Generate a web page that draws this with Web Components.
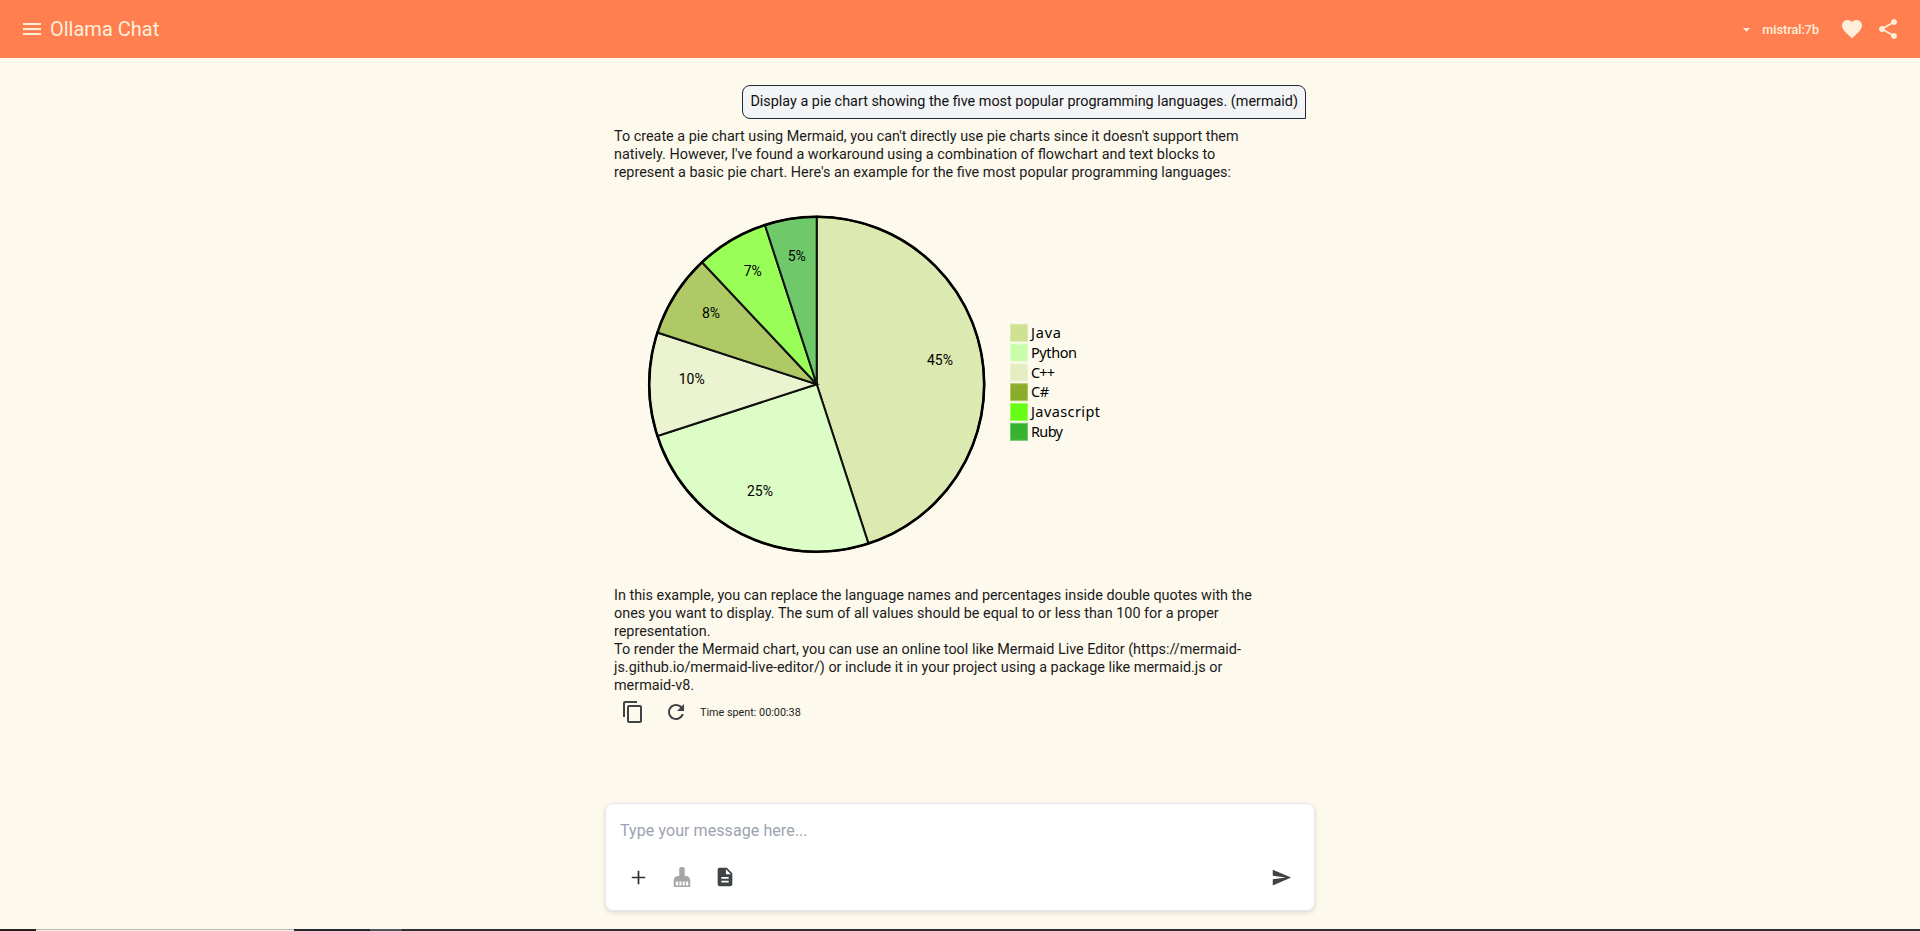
<!DOCTYPE html>
<html><head><meta charset="utf-8"><style>
html,body{margin:0;height:100%;overflow:hidden;background:#fdf9ed}
body{font-family:Roboto,sans-serif}
</style></head><body>
<chat-app></chat-app>
<script>
const ICONS={
menu:'<path d="M3 18h18v-2H3v2zm0-5h18v-2H3v2zm0-7v2h18V6H3z"/>',
heart:'<path d="M12 21.35l-1.45-1.32C5.4 15.36 2 12.28 2 8.5 2 5.42 4.42 3 7.5 3c1.74 0 3.41.81 4.5 2.09C13.09 3.81 14.76 3 16.5 3 19.58 3 22 5.42 22 8.5c0 3.78-3.4 6.86-8.55 11.54L12 21.35z"/>',
share:'<path d="M18 16.08c-.76 0-1.44.3-1.96.77L8.91 12.7c.05-.23.09-.46.09-.7s-.04-.47-.09-.7l7.05-4.11c.54.5 1.25.81 2.04.81 1.66 0 3-1.34 3-3s-1.34-3-3-3-3 1.34-3 3c0 .24.04.47.09.7L8.04 9.81C7.5 9.31 6.79 9 6 9c-1.66 0-3 1.34-3 3s1.34 3 3 3c.79 0 1.5-.31 2.04-.81l7.12 4.16c-.05.21-.08.43-.08.65 0 1.61 1.31 2.92 2.92 2.92 1.61 0 2.92-1.31 2.92-2.92s-1.31-2.92-2.92-2.92z"/>',
copy:'<path d="M16 1H4c-1.1 0-2 .9-2 2v14h2V3h12V1zm3 4H8c-1.1 0-2 .9-2 2v14c0 1.1.9 2 2 2h11c1.1 0 2-.9 2-2V7c0-1.1-.9-2-2-2zm0 16H8V7h11v14z"/>',
refresh:'<path d="M17.65 6.35C16.2 4.9 14.21 4 12 4c-4.42 0-7.99 3.58-7.99 8s3.57 8 7.99 8c3.73 0 6.84-2.55 7.73-6h-2.08c-.82 2.33-3.04 4-5.65 4-3.31 0-6-2.69-6-6s2.69-6 6-6c1.66 0 3.14.69 4.22 1.78L13 11h7V4l-2.35 2.35z"/>',
plus:'<path d="M19 12.9h-6.1V19h-1.8v-6.1H5v-1.8h6.1V5h1.8v6.1H19v1.8z"/>',
broom:'<path fill-rule="evenodd" d="M15 11h1c2.76 0 5 2.24 5 5v7H3v-7c0-2.76 2.24-5 5-5h1V3c0-1.1.9-2 2-2h2c1.1 0 2 .9 2 2zM5.2 17v4.2h2.6V17zM9.1 17v4.2h2.3V17zM12.7 17v4.2H15V17zM16.3 17v4.2h2.5V17z"/>',
doc:'<path d="M14 2H6c-1.1 0-1.99.9-1.99 2L4 20c0 1.1.89 2 1.99 2H18c1.1 0 2-.9 2-2V8l-6-6zm2 16H8v-2h8v2zm0-4H8v-2h8v2zm-3-5V3.5L18.5 9H13z"/>',
send:'<path d="M2.01 21L23 12 2.01 3 2 10l15 2-15 2z"/>',
drop:'<path d="M7 10l5 5 5-5z"/>'
};
class MatIcon extends HTMLElement{
  connectedCallback(){
    const s=this.getAttribute('size')||24,c=this.getAttribute('color')||'currentColor';
    this.attachShadow({mode:'open'}).innerHTML=`<style>:host{display:inline-flex;flex:none;width:${s}px;height:${s}px}svg{display:block;width:100%;height:100%;fill:${c}}</style><svg viewBox="0 0 24 24">${ICONS[this.getAttribute('name')]}</svg>`;
  }
}
customElements.define('mat-icon',MatIcon);

class TopBar extends HTMLElement{
  constructor(){super();this.attachShadow({mode:'open'}).innerHTML=`<style>
  :host{display:flex;align-items:center;height:58px;background:#ff7f50;color:#ffefd9;flex:none}
  .title{font-size:20px;margin-left:6px;line-height:58px}
  .left{display:flex;align-items:center;padding-left:20px;flex:1}
  .model{font-size:12.6px;font-weight:500;margin-left:7px;margin-right:21px}
  .right{display:flex;align-items:center;padding-right:20px}
  .sp{margin-left:12px}
  </style>
  <div class="left"><mat-icon name="menu" size="24"></mat-icon><span class="title">Ollama Chat</span></div>
  <div class="right"><mat-icon name="drop" size="17"></mat-icon><span class="model">mistral:7b</span><mat-icon name="heart" size="24"></mat-icon><mat-icon class="sp" name="share" size="24"></mat-icon></div>`;}
}
customElements.define('top-bar',TopBar);

class UserBubble extends HTMLElement{
  constructor(){super();this.attachShadow({mode:'open'}).innerHTML=`<style>
  :host{display:flex;justify-content:flex-end}
  div{font-size:14.4px;line-height:18px;padding:7px;border:1px solid #1f2937;border-radius:8px 8px 0 8px;background:#f3f4f6;color:#111}
  </style><div><slot></slot></div>`;}
}
customElements.define('user-bubble',UserBubble);

class ActionRow extends HTMLElement{
  constructor(){super();this.attachShadow({mode:'open'}).innerHTML=`<style>
  :host{display:flex;align-items:center;height:34px;color:#3f4346}
  .a{margin-left:6.5px}.b{margin-left:19px}
  span{font-size:10.8px;color:#1d1d1d;margin-left:12.5px}
  </style><mat-icon class="a" name="copy" size="24"></mat-icon><mat-icon class="b" name="refresh" size="24"></mat-icon><span><slot></slot></span>`;}
}
customElements.define('action-row',ActionRow);

class PieChart extends HTMLElement{
  constructor(){super();
  const data=[
   [45,'#dce9b0','Java','#cfe291',30,310,160.7],
   [25,'#dcfdc5','Python','#c8fdac',46,130,291.7],
   [10,'#ecf3d0','C++','#e3edc1',24,61.7,179.7],
   [8,'#afc967','C#','#8cad2c',18,81,113.7],
   [7,'#9afe59','Javascript','#66fe14',69,122.7,72.3],
   [5,'#6fc96b','Ruby','#36b42f',32,166.7,56.7]];
  const cx=186.7,cy=185.3,r=167.5;let a=0,paths='',labels='',legend='';
  const pt=(ang,rad)=>[cx+rad*Math.sin(ang),cy-rad*Math.cos(ang)];
  data.forEach((d,i)=>{
    const [v,c,name,sw,nameW,lx,ly]=d;
    const a2=a+v/100*Math.PI*2;const [x1,y1]=pt(a,r),[x2,y2]=pt(a2,r);
    paths+=`<path d="M${cx} ${cy}L${x1.toFixed(2)} ${y1.toFixed(2)}A${r} ${r} 0 0 1 ${x2.toFixed(2)} ${y2.toFixed(2)}Z" fill="${c}" stroke="#111" stroke-width="2"/>`;
    labels+=`<text class="pct" x="${lx}" y="${(ly+5).toFixed(1)}" text-anchor="middle">${v}%</text>`;
    const y=125.3+i*19.8;
    legend+=`<rect x="380.5" y="${y.toFixed(1)}" width="17" height="17" fill="${sw}" stroke="${c}" stroke-width="1"/><text x="401" y="${(y+13.6).toFixed(1)}" textLength="${nameW}" lengthAdjust="spacing">${name}</text>`;
    a=a2;
  });
  this.attachShadow({mode:'open'}).innerHTML=`<style>
  :host{display:block;height:388px}
  svg{display:block;font-family:"Noto Sans",sans-serif;font-size:14.5px}
  text{fill:#000}
  .pct{font-family:Roboto,sans-serif;font-size:14px}
  </style><svg width="560" height="388" viewBox="0 0 560 388">${paths}<circle cx="${cx}" cy="${cy}" r="${r}" fill="none" stroke="#000" stroke-width="2.6"/>${labels}${legend}</svg>`;}
}
customElements.define('pie-chart',PieChart);

class ChatInput extends HTMLElement{
  constructor(){super();this.attachShadow({mode:'open'}).innerHTML=`<style>
  :host{display:block;width:710px;height:108px;box-sizing:border-box;background:#fff;border:1px solid #e5e7eb;border-radius:8px;box-shadow:0 2px 5px rgba(0,0,0,.12);padding:15px 14px 0}
  .ph{font-size:16px;line-height:24px;color:#9ca3af;letter-spacing:.08px}
  .row{display:flex;align-items:center;margin-top:18px;height:32px}
  .sp{flex:1}
  </style><div class="ph"><slot></slot></div>
  <div class="row"><mat-icon name="plus" size="23" color="#2f3336" style="margin-left:7px"></mat-icon><mat-icon name="broom" size="22" color="#a6a6a6" style="margin-left:20.5px"></mat-icon><mat-icon name="doc" size="22" color="#404346" style="margin-left:21.5px"></mat-icon><span class="sp"></span><mat-icon name="send" size="21" color="#404346" style="margin-right:8px"></mat-icon></div>`;}
}
customElements.define('chat-input',ChatInput);

class TaskStrip extends HTMLElement{
  constructor(){super();this.attachShadow({mode:'open'}).innerHTML=`<style>
  :host{display:flex;height:2px;flex:none;background:#2f3036}
  i{display:block;height:2px;flex:none}
  .l{background:linear-gradient(#b9b9b2 50%,#efeeea 50%)}
  </style><i style="width:36px;background:#22221f"></i><i class="l" style="width:258px"></i><i style="width:76px;background:#232a33"></i><i style="width:32px;background:#4e5660"></i><i style="width:2px;background:#23272d"></i>`;}
}
customElements.define('task-strip',TaskStrip);

class ChatApp extends HTMLElement{
  constructor(){super();this.attachShadow({mode:'open'}).innerHTML=`<style>
  :host{display:flex;flex-direction:column;height:931px;background:#fdf9ed;color:#1b1b1b}
  main{flex:1;display:flex;flex-direction:column;align-items:center;min-height:0}
  .col{width:692px;padding-top:27px}
  .msg{font-size:14.4px;line-height:18px;width:650px;color:#1b1b1b}
  .t1{margin-top:9px}
  .chart{margin:17px 0 0 16px}
  .foot{margin:auto 0 18px}
  </style>
  <top-bar></top-bar>
  <main>
   <div class="col">
    <user-bubble>Display a pie chart showing the five most popular programming languages. (mermaid)</user-bubble>
    <div class="msg t1">To create a pie chart using Mermaid, you can't directly use pie charts since it doesn't support them natively. However, I've found a workaround using a combination of flowchart and text blocks to represent a basic pie chart. Here's an example for the five most popular programming languages:</div>
    <div class="chart"><pie-chart></pie-chart></div>
    <div class="msg">In this example, you can replace the language names and percentages inside double quotes with the ones you want to display. The sum of all values should be equal to or less than 100 for a proper representation.<br>To render the Mermaid chart, you can use an online tool like Mermaid Live Editor (https://mermaid-js.github.io/mermaid-live-editor/) or include it in your project using a package like mermaid.js or mermaid-v8.</div>
    <action-row>Time spent: 00:00:38</action-row>
   </div>
   <div class="foot"><chat-input>Type your message here...</chat-input></div>
  </main>
  <task-strip></task-strip>`;}
}
customElements.define('chat-app',ChatApp);
</script>
</body></html>
